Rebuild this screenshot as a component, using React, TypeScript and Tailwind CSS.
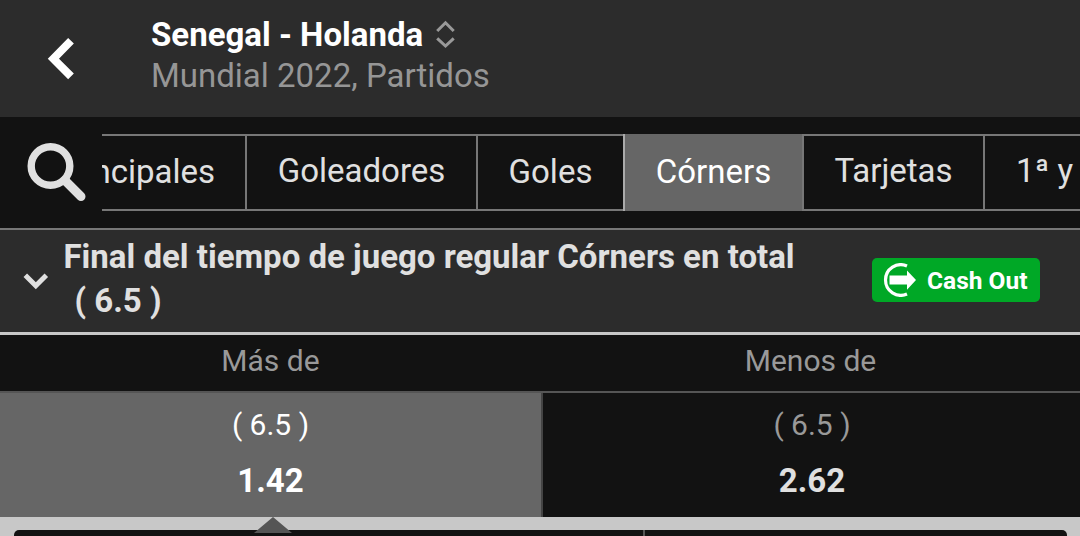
import clsx from "clsx";

interface Tab { label: string; className: string; active?: boolean; }
interface Outcome { label: string; line: string; odds: string; selected: boolean; }

const TABS: Tab[] = [
  { label: "Principales", className: "w-[213px] -ml-[68px] pr-[30px] pb-[2px] justify-end border-r-2" },
  { label: "Goleadores", className: "w-[231px] justify-center border-r-2 pb-[4px]" },
  { label: "Goles", className: "w-[145px] justify-center pb-[2px]" },
  { label: "Córners", className: "w-[181px] justify-center border-l-2 border-r-2 border-l-[#aaaaaa] pb-[2px]", active: true },
  { label: "Tarjetas", className: "w-[181px] justify-center border-r-2 pb-[4px]" },
  { label: "1ª y", className: "w-[240px] pl-[31px] pb-[4px]" },
];

const OUTCOMES: Outcome[] = [
  { label: "Más de", line: "( 6.5 )", odds: "1.42", selected: true },
  { label: "Menos de", line: "( 6.5 )", odds: "2.62", selected: false },
];

function Header() {
  return (
    <header className="flex h-[117px] shrink-0 bg-[#2c2c2c]">
      <button className="flex w-[151px] shrink-0 items-start pl-[47px] pt-[37px]">
        <svg width="28" height="43" viewBox="0 0 28 43" fill="none" stroke="#ffffff" strokeWidth="8">
          <path d="M24 3.8 L6.4 21.7 L24 39.4" />
        </svg>
      </button>
      <div className="whitespace-nowrap pt-[14px]">
        <div className="flex h-[41px]">
          <h1 className="text-[33px] leading-[41px] font-bold text-white">Senegal - Holanda</h1>
          <svg className="ml-[13px] mt-[6px]" width="20" height="30" viewBox="0 0 20 30" fill="none" stroke="#999999" strokeWidth="3">
            <path d="M1.2 11 L9.5 2.8 L17.7 11 M1.2 18.3 L9.5 26 L17.7 18.3" />
          </svg>
        </div>
        <p className="text-[33px] leading-[41px] text-[#969696]">Mundial 2022, Partidos</p>
      </div>
    </header>
  );
}

function TabBar() {
  return (
    <nav className="flex h-[111px] shrink-0 bg-[#121212] pt-[17px]">
      <button className="w-[102px] shrink-0 pl-[26px]">
        <svg className="-mt-[17px]" width="62" height="62" viewBox="0 0 62 62" fill="none" stroke="#e0e0e0">
          <circle cx="24.5" cy="24" r="19.3" strokeWidth="7.4" />
          <path d="M39 38.5 L55 54.5" strokeWidth="9" strokeLinecap="round" />
        </svg>
      </button>
      <div className="flex h-[77px] flex-1 overflow-hidden whitespace-nowrap text-[33px] leading-[40px]">
        {TABS.map((tab) => (
          <div key={tab.label} className={clsx("flex shrink-0 items-center border-[#777777]", tab.className, tab.active ? "bg-[#666666] text-white" : "border-y-2 text-[#e0e0e0]")}>
            {tab.label}
          </div>
        ))}
      </div>
    </nav>
  );
}

function MarketHeader() {
  return (
    <section className="flex h-[107px] shrink-0 items-center border-t-2 border-b-3 border-t-[#777777] border-b-[#c8c8c8] bg-[#2c2c2c]">
      <svg className="ml-[23px] mr-[14.5px] shrink-0" width="26" height="18" viewBox="0 0 26 18" fill="none" stroke="#e0e0e0" strokeWidth="5">
        <path d="M2.3 3.2 L12.8 13.7 L23.3 3.2" />
      </svg>
      <h2 className="w-[808.5px] shrink-0 pb-[5px] text-[33px] leading-[44px] font-bold whitespace-nowrap text-[#e0e0e0]">
        Final del tiempo de juego regular Córners en total
        <span className="block pl-[11px]">( 6.5 )</span>
      </h2>
      <button className="mb-[2px] flex h-[44px] w-[168px] items-center rounded-[5px] bg-[#00a826] pl-[10px] text-[24.5px] font-bold whitespace-nowrap text-white">
        <svg className="mr-[11px] shrink-0" width="34" height="34" viewBox="0 0 34 34">
          <path d="M25 3 A15.3 15.3 0 1 0 25 31" fill="none" stroke="#ffffff" strokeWidth="3.2" />
          <path d="M7.5 12.6 H25 V7.4 L34 17 L25 26.8 V21.6 H7.5 Z" fill="#ffffff" />
        </svg>
        <span className="pt-[2px]">Cash Out</span>
      </button>
    </section>
  );
}

export default function App() {
  return (
    <main className="flex h-[536px] w-[1080px] flex-col overflow-hidden bg-[#121212] font-['Roboto',sans-serif]">
      <Header />
      <TabBar />
      <MarketHeader />
      <div className="grid shrink-0 grid-cols-[541px_539px]">
        {OUTCOMES.map((o) => (
          <div key={o.label} className="h-[56px] text-center text-[30px] leading-[52px] text-[#999999]">{o.label}</div>
        ))}
      </div>
      <div className="grid h-[126px] shrink-0 grid-cols-[543px_537px] border-t-2 border-[#555555]">
        {OUTCOMES.map((o) => (
          <button key={o.label} className={clsx("flex flex-col items-center pt-[12px]", o.selected ? "border-r-2 border-[#444444] bg-[#666666] text-white" : "pl-px text-[#e0e0e0]")}>
            <span className={clsx("text-[30px] leading-[40px]", !o.selected && "text-[#999999]")}>{o.line}</span>
            <span className="mt-[16px] text-[33px] leading-[40px] font-bold">{o.odds}</span>
          </button>
        ))}
      </div>
      <div className="relative h-[19px] shrink-0 bg-[#c8c8c8] pt-[13px] pr-[13px] pl-[14px]">
        <div className="grid h-[20px] grid-cols-[631px_1fr] rounded-[5px] bg-[#121212]">
          <div className="border-r-2 border-[#555555]" />
        </div>
        <svg className="absolute top-0 left-[254px]" width="38" height="16" viewBox="0 0 38 16">
          <path d="M0 16 L19 0 L38 16 Z" fill="#555555" />
        </svg>
      </div>
    </main>
  );
}
